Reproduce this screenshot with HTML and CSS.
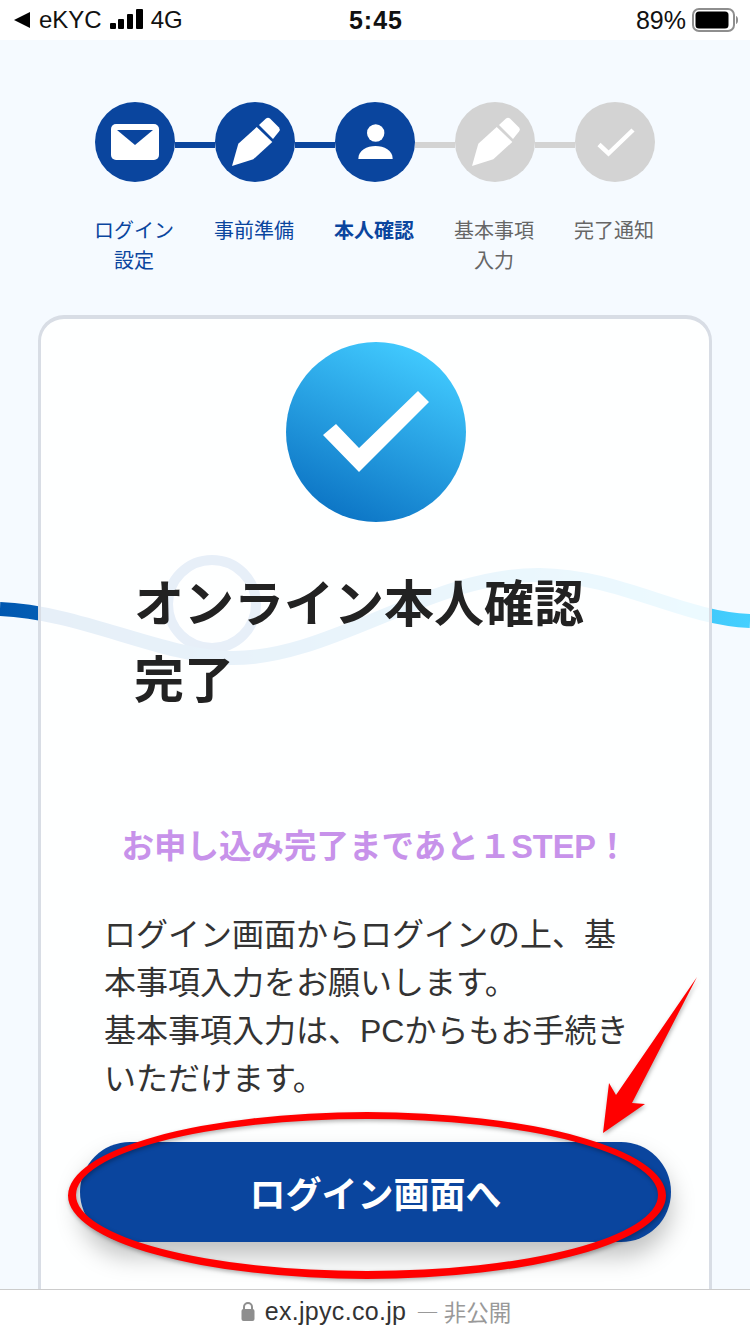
FILE: index.html
```html
<!DOCTYPE html>
<html lang="ja">
<head>
    <meta charset="UTF-8">
    <title>オンライン本人確認完了</title>
    <link rel="stylesheet" href="styles.css">
</head>
<body>
    <div class="screen">
        <!-- Status bar -->
        <div class="status-bar">
            <div class="status-left">
                <svg class="back-icon" width="16" height="16" viewBox="0 0 16 16"><path d="M16 0V16L0 8Z" fill="#000"/></svg>
                <span>eKYC</span>
                <svg class="signal" width="33" height="20" viewBox="0 0 33 20" fill="#000">
                    <rect x="0" y="14" width="6" height="6" rx="1"/>
                    <rect x="8" y="10" width="6" height="10" rx="1"/>
                    <rect x="17" y="5" width="6" height="15" rx="1"/>
                    <rect x="26" y="0" width="7" height="20" rx="1"/>
                </svg>
                <span>4G</span>
            </div>
            <div class="status-time">5:45</div>
            <div class="status-right">
                <span>89%</span>
                <svg width="46" height="24" viewBox="0 0 46 24">
                    <rect x="1" y="1" width="41" height="22" rx="6" fill="none" stroke="#8e8e8e" stroke-width="2"/>
                    <rect x="3.500" y="3.500" width="33" height="17" rx="3.500" fill="#000"/>
                    <path d="M44 8c1.500.5 2 2 2 4s-.5 3.500-2 4Z" fill="#8e8e8e"/>
                </svg>
            </div>
        </div>

        <!-- Decorative wave behind the card -->
        <svg class="wave" width="750" height="120" viewBox="0 0 750 120">
            <defs>
                <linearGradient id="waveColor" x1="0" x2="1" y1="0" y2="0">
                    <stop offset="0" stop-color="#0057b0"/>
                    <stop offset="1" stop-color="#45d0ff"/>
                </linearGradient>
            </defs>
            <circle cx="212" cy="54" r="44" fill="none" stroke="#0a5ab8" stroke-width="10"/>
            <path d="M0 59C80 62 160 106 230 108C330 110 430 24 540 25C620 26 680 68 750 71" fill="none" stroke="url(#waveColor)" stroke-width="14"/>
        </svg>

        <main class="content">
            <!-- Stepper -->
            <div class="stepper">
                <div class="step done">
                    <div class="step-circle">
                        <svg width="48" height="36" viewBox="0 0 48 36">
                            <rect width="48" height="36" rx="5" fill="#fff"/>
                            <path d="M6 6H42L24 21Z" fill="#0a459e"/>
                        </svg>
                    </div>
                    <div class="step-label">ログイン<br>設定</div>
                </div>
                <div class="step done">
                    <div class="step-circle">
                        <svg width="80" height="80" viewBox="0 0 80 80" fill="#fff">
                            <path d="M17 64 23.300 41.700 41.700 25 57.300 40 38.300 57.300Z"/>
                            <path d="M44 23 51 16.500Q53 15 55 16.500L64 25.500Q65.500 27.500 64 29.500L58 37Z"/>
                        </svg>
                    </div>
                    <div class="step-label">事前準備</div>
                </div>
                <div class="step done current">
                    <div class="step-circle">
                        <svg width="80" height="80" viewBox="0 0 80 80" fill="#fff">
                            <circle cx="40.700" cy="31" r="8.700"/>
                            <path d="M23.300 57C23.300 48 32 44 40.500 44S57.700 48 57.700 57Z"/>
                        </svg>
                    </div>
                    <div class="step-label">本人確認</div>
                </div>
                <div class="step">
                    <div class="step-circle">
                        <svg width="80" height="80" viewBox="0 0 80 80" fill="#fff">
                            <path d="M17 64 23.300 41.700 41.700 25 57.300 40 38.300 57.300Z"/>
                            <path d="M44 23 51 16.500Q53 15 55 16.500L64 25.500Q65.500 27.500 64 29.500L58 37Z"/>
                        </svg>
                    </div>
                    <div class="step-label">基本事項<br>入力</div>
                </div>
                <div class="step last">
                    <div class="step-circle">
                        <svg width="80" height="80" viewBox="0 0 80 80">
                            <path d="M24 42.500 33.500 51.500 58 28" fill="none" stroke="#fff" stroke-width="4.500"/>
                        </svg>
                    </div>
                    <div class="step-label">完了通知</div>
                </div>
            </div>

            <!-- Card -->
            <section class="card">
                <div class="done-icon">
                    <svg width="180" height="180" viewBox="0 0 180 180">
                        <path d="M37 93 50 82 73 106 132 49 143 60 73 130Z" fill="#fff"/>
                    </svg>
                </div>
                <h1 class="card-title">オンライン本人確認<br>完了</h1>
                <p class="card-lead">お申し込み完了まであと１STEP！</p>
                <p class="card-text">ログイン画面からログインの上、基本事項入力をお願いします。<br>基本事項入力は、PCからもお手続きいただけます。</p>
                <button class="login-btn" type="button">ログイン画面へ</button>
            </section>
        </main>

        <!-- Red marks drawn over the screenshot -->
        <svg class="annotation" width="750" height="1334" viewBox="0 0 750 1334" fill="#f00">
            <path fill-rule="evenodd" d="M68 1195.500A299 83.500 0 0 1 666 1195.500A299 83.500 0 0 1 68 1195.500ZM76 1195A291 76 0 0 0 658 1195A291 76 0 0 0 76 1195Z"/>
            <path d="M697 977 616 1095 609 1083 603 1133 645 1104 632 1103Z"/>
        </svg>

        <!-- Browser address bar -->
        <div class="address-bar">
            <svg class="lock" width="14" height="20" viewBox="0 0 14 20">
                <path d="M3 9V6a4 4 0 0 1 8 0V9" fill="none" stroke="#8e8e8e" stroke-width="2"/>
                <rect x="0.500" y="8" width="13" height="12" rx="2" fill="#8e8e8e"/>
            </svg>
            <span class="host">ex.jpyc.co.jp</span>
            <span class="private">— 非公開</span>
        </div>
    </div>
</body>
</html>
```

FILE: styles.css
```css
* {
    box-sizing: border-box;
}

html, body {
    margin: 0;
    padding: 0;
}

body {
    font-family: "Liberation Sans", "Noto Sans CJK JP", sans-serif;
    background-color: #f5faff;
    color: #222;
}

.screen {
    position: relative;
    width: 750px;
    height: 1334px;
    overflow: hidden;
    display: flex;
    flex-direction: column;
    background-color: #f5faff;
}

/* Status bar */
.status-bar {
    position: relative;
    z-index: 3;
    flex: none;
    height: 40px;
    padding: 0 12px 0 14px;
    display: flex;
    align-items: center;
    justify-content: space-between;
    background-color: #fff;
    font-size: 24px;
    color: #111;
}

.status-left {
    width: 240px;
    display: flex;
    align-items: center;
}

.back-icon {
    margin-right: 9px;
}

.signal {
    margin: 0 8px 2px 8px;
}

.status-time {
    font-size: 25px;
    font-weight: bold;
    letter-spacing: 1px;
}

.status-right {
    width: 240px;
    display: flex;
    align-items: center;
    justify-content: flex-end;
    gap: 6px;
    font-size: 25px;
}

/* Wave */
.wave {
    position: absolute;
    left: 0;
    top: 550px;
    z-index: 0;
}

/* Main content */
.content {
    position: relative;
    z-index: 1;
    flex: 1;
    min-height: 0;
    padding: 62px 38px 0;
}

/* Stepper */
.stepper {
    display: flex;
    justify-content: center;
    gap: 40px;
}

.step {
    position: relative;
    width: 80px;
    text-align: center;
}

.step-circle {
    width: 80px;
    height: 80px;
    border-radius: 50%;
    background-color: #d3d3d3;
    display: flex;
    align-items: center;
    justify-content: center;
}

.step::after {
    content: "";
    position: absolute;
    left: 80px;
    top: 40px;
    width: 40px;
    height: 6px;
    background-color: #d3d3d3;
}

.step.last::after {
    display: none;
}

.step.done .step-circle,
.step.done::after {
    background-color: #0a459e;
}

.step.current::after {
    background-color: #d3d3d3;
}

.step-label {
    margin: 33px -9px 0 -11px;
    height: 100px;
    font-family: "Noto Sans CJK JP", sans-serif;
    font-size: 20px;
    line-height: 30px;
    color: #666;
}

.step.done .step-label {
    color: #0a459e;
}

.step.current .step-label {
    font-weight: bold;
}

/* Card */
.card {
    height: 1100px;
    padding: 23px 75px 0 63px;
    background-color: rgba(255, 255, 255, 0.9);
    border: 3px solid #d8dde5;
    border-top-width: 4px;
    border-radius: 26px;
}

.done-icon {
    width: 180px;
    height: 180px;
    margin-left: 182px;
    border-radius: 50%;
    background: linear-gradient(205deg, #42cbff 10%, #0569bd 100%);
}

.card-title {
    margin: 45px 0 0 30px;
    font-size: 50px;
    line-height: 76px;
    font-weight: bold;
    color: #222;
}

.card-lead {
    margin: 104px 0 0 -63px;
    width: 668px;
    text-align: center;
    font-size: 32.500px;
    line-height: 48px;
    font-weight: bold;
    color: #c792ea;
}

.card-text {
    margin: 40px 0 0;
    font-size: 32px;
    line-height: 48px;
    color: #333;
}

.login-btn {
    display: block;
    width: 591px;
    height: 100px;
    margin: 39px 0 0 -24px;
    border: none;
    border-radius: 50px;
    background-color: #0a459e;
    color: #fff;
    font-family: "Liberation Sans", "Noto Sans CJK JP", sans-serif;
    font-size: 36px;
    font-weight: bold;
    box-shadow: 0 14px 24px rgba(0, 0, 0, 0.25);
}

/* Annotation */
.annotation {
    position: absolute;
    left: 0;
    top: 0;
    z-index: 2;
    filter: drop-shadow(1px 2px 2px rgba(0, 0, 0, 0.3));
}

/* Address bar */
.address-bar {
    position: absolute;
    left: 0;
    bottom: 0;
    z-index: 3;
    width: 750px;
    height: 45px;
    padding-bottom: 2px;
    display: flex;
    align-items: center;
    justify-content: center;
    gap: 10px;
    background-color: #fff;
    border-top: 1px solid #ccc;
    font-size: 25px;
}

.lock {
    margin-left: 2px;
}

.host {
    letter-spacing: 0.300px;
    color: #333;
}

.private {
    font-family: "Noto Sans CJK JP", sans-serif;
    font-size: 22.500px;
    color: #999;
}
```
